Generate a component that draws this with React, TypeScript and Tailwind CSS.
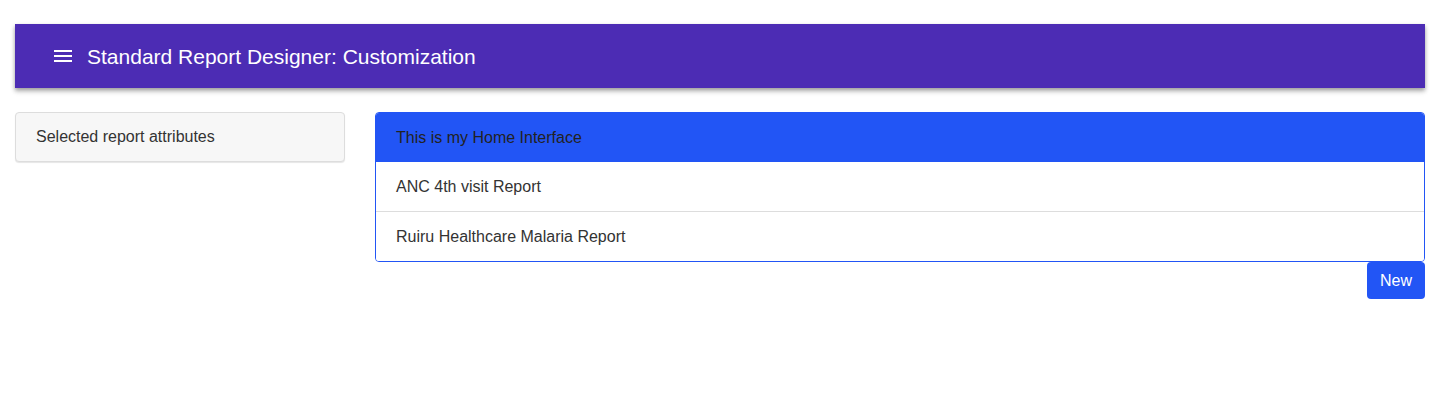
const reports = ["ANC 4th visit Report", "Ruiru Healthcare Malaria Report"]

function MenuIcon() {
  return (
    <svg width="24" height="24" viewBox="0 0 24 24" fill="white">
      <path d="M3 18h18v-2H3v2zm0-5h18v-2H3v2zm0-7v2h18V6H3z" />
    </svg>
  )
}

export default function App() {
  return (
    <div className="min-h-[406px] bg-white px-[15px] pt-6 font-['Liberation_Sans',Arial,sans-serif] text-[#333]">
      <header className="flex h-16 items-center gap-3 bg-[#4c2cb4] pl-[36px] text-white shadow-[0_2px_4px_rgba(0,0,0,0.3),0_4px_5px_rgba(0,0,0,0.14)]">
        <MenuIcon />
        <h1 className="text-[21px] leading-none">Standard Report Designer: Customization</h1>
      </header>

      <div className="mt-6 grid grid-cols-[330px_1fr] gap-[30px]">
        <div className="self-start rounded border border-[#ddd] bg-[#f7f7f7] shadow-[0_1px_1px_rgba(0,0,0,0.1)]">
          <div className="flex h-12 items-center px-5 text-base">Selected report attributes</div>
        </div>

        <div className="flex flex-col items-end">
          <div className="w-full overflow-hidden rounded border border-[#2255f5]">
            <div className="flex h-[49px] items-center bg-[#2255f5] px-5 text-base text-[#222]">
              This is my Home Interface
            </div>
            <ul>
              {reports.map((r, i) => (
                <li
                  key={r}
                  className={
                    "flex items-center bg-white px-5 text-base " +
                    (i > 0 ? "h-[50px] border-t border-[#ddd]" : "h-[49px]")
                  }
                >
                  {r}
                </li>
              ))}
            </ul>
          </div>
          <button className="h-[37px] rounded bg-[#2255f5] px-[13px] text-base text-white">New</button>
        </div>
      </div>
    </div>
  )
}
